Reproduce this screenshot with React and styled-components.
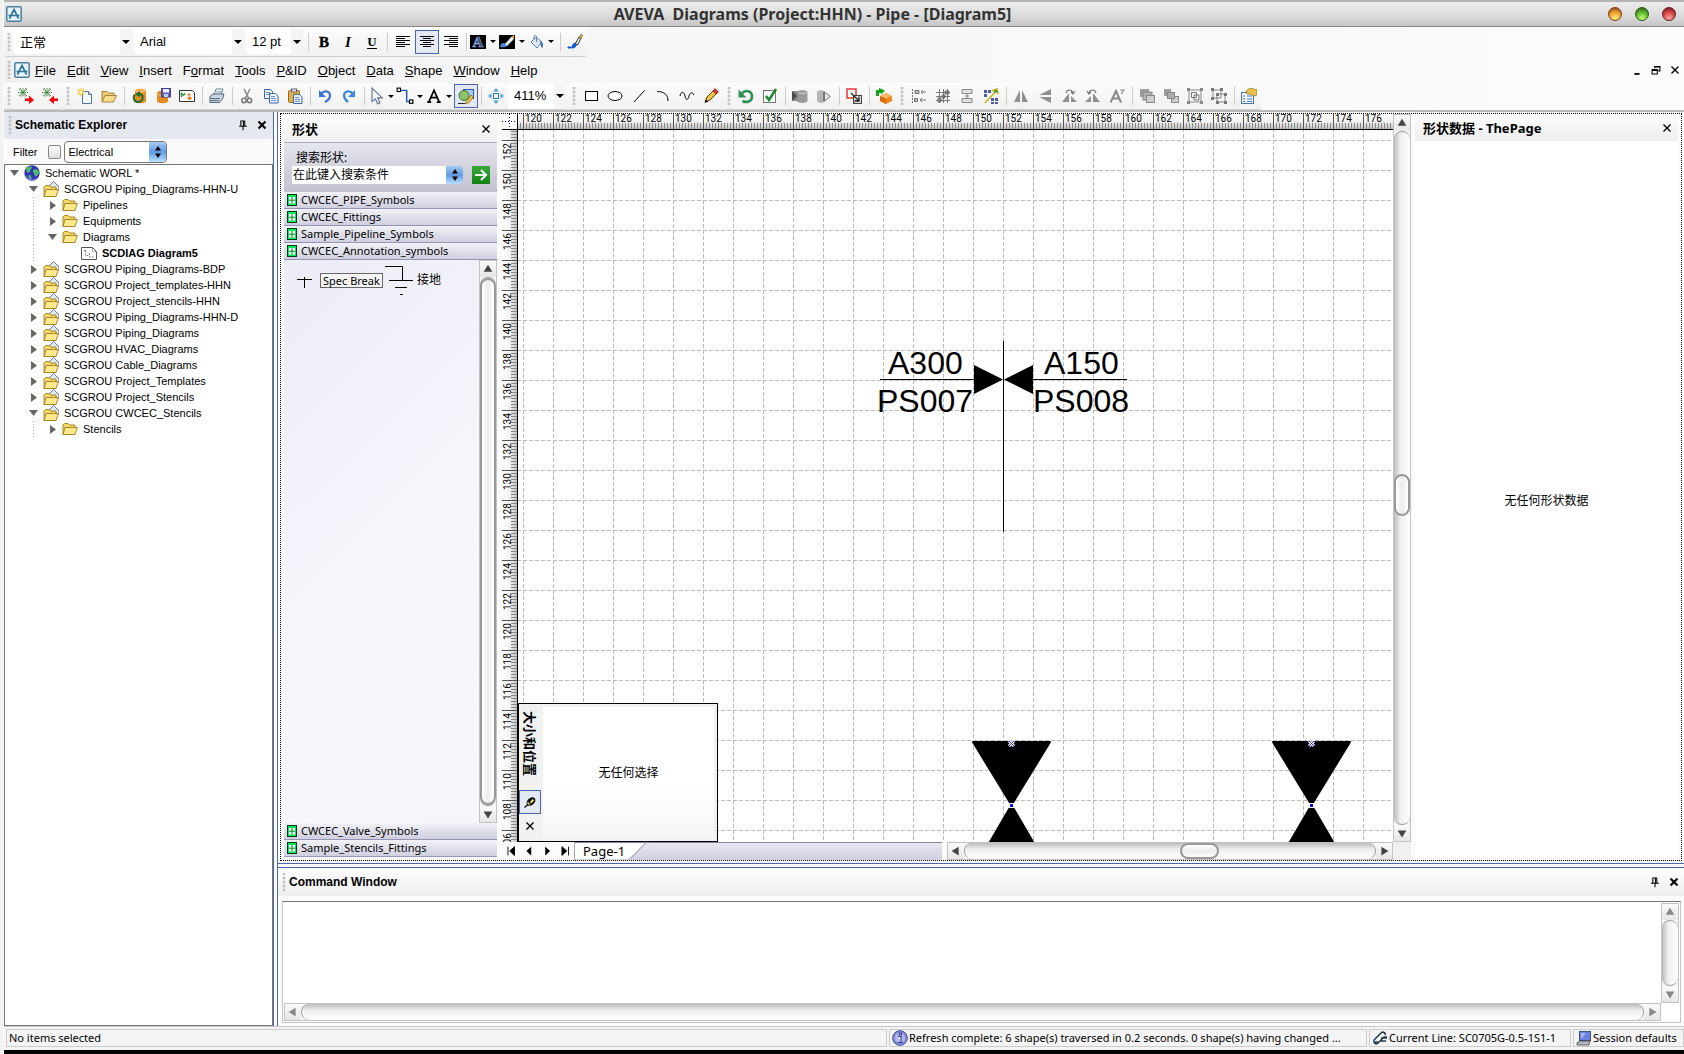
import React, { useState } from "react";
import styled, { createGlobalStyle, css } from "styled-components";

const UI = '"Liberation Sans", Arial, "Noto Sans CJK SC", sans-serif';
const SEG = '"Noto Sans", "Noto Sans CJK SC", sans-serif';
const SERIF = '"Liberation Serif", serif';
const BLUE = "#4a66ac";

const Global = createGlobalStyle`
  * { box-sizing: border-box; }
  body { margin: 0; background: #fbfbfb; color: #000; font: 12px/16px ${UI}; }
  button, input, select, textarea { font: inherit; color: inherit; margin: 0; padding: 0; border: 0; background: none; border-radius: 0; outline: none; }
  svg { display: block; flex: none; }
`;

/* ---------- icons (16 x 16) ---------- */
const Folder = (
  <>
    <path d="M1 13.500V4l1.500-1.500H6L7.500 4H13v3" fill="#f5d868" stroke="#a8862a" />
    <path d="M3 6.500h12.300L13 13.500H1z" fill="#ffe98c" stroke="#a8862a" />
  </>
);
const glyphs = {
  logo: (
    <>
      <rect x=".8" y=".8" width="14.400" height="14.400" rx="1.500" fill="#e6f2f7" stroke="#4c809c" strokeWidth="1.500" />
      <path d="M3.500 12.500L8 3.500l4.500 9M2.500 9.500h11" fill="none" stroke="#2e7795" strokeWidth="1.700" />
    </>
  ),
  bold: <text x="8" y="13" textAnchor="middle" fontFamily={SERIF} fontWeight="bold" fontSize="15" stroke="#000" strokeWidth=".4">B</text>,
  italic: <text x="8" y="13" textAnchor="middle" fontFamily={SERIF} fontWeight="bold" fontStyle="italic" fontSize="15">I</text>,
  underline: (
    <>
      <text x="8" y="12" textAnchor="middle" fontFamily={SERIF} fontWeight="bold" fontSize="13">U</text>
      <path d="M3 14.500h10" stroke="#000" />
    </>
  ),
  left: <path d="M1 2.500h14M1 4.500h9M1 6.500h14M1 8.500h9M1 10.500h14M1 12.500h9" stroke="#000" />,
  center: <path d="M1 2.500h14M4 4.500h8M1 6.500h14M4 8.500h8M1 10.500h14M4 12.500h8" stroke="#000" />,
  right: <path d="M1 2.500h14M6 4.500h9M1 6.500h14M6 8.500h9M1 10.500h14M6 12.500h9" stroke="#000" />,
  fontColor: (
    <>
      <rect x="0" y="1" width="16" height="14" fill="#000" />
      <text x="8" y="13" textAnchor="middle" fontFamily={SERIF} fontWeight="bold" fontSize="15" fill="#24407c" stroke="#9ab2e2" strokeWidth=".7">A</text>
    </>
  ),
  lineColor: (
    <>
      <rect x="0" y="1" width="16" height="14" fill="#000" />
      <path d="M1 13c1-4 3-5 6-3s-1 4-6 3z" fill="#4d8ae0" />
      <path d="M6 10l6-7 3 1-1 2-6 6z" fill="#e8edf5" />
      <path d="M12 3l3-2v4z" fill="#e5a93c" />
    </>
  ),
  bucket: (
    <>
      <path d="M3 8l5-5 6 5-5 6z" fill="#dfe9f6" stroke="#5b7fae" />
      <path d="M6 6V2.500c0-1.500 2.500-1.500 2.500 0V8" fill="none" stroke="#70849c" />
      <path d="M12 7c3 1 3.500 4 2.500 7-1.500 0-2-3-2.500-7z" fill="#3572bd" />
    </>
  ),
  brush: (
    <>
      <path d="M1 13h3v1H1z" fill="#0a50d0" stroke="#0a50d0" />
      <path d="M5 14c0-4 2-5 4-5 1 3-1 5-4 5z" fill="#0a62e0" stroke="#0a50d0" />
      <path d="M8.500 9.500L12 3l2 1-3.500 7z" fill="#fff" stroke="#111" strokeWidth=".9" />
      <path d="M12 4l2-4 1.500 1-1.500 4z" fill="#f0bc2a" stroke="#333" strokeWidth=".5" />
    </>
  ),
  exportTree: (
    <>
      <path d="M1 1l8 7M9 1L1 8M5 0v9M0 4.500h10M2 0l6 9M8 0L2 9" stroke="#2b7d2b" strokeWidth=".9" strokeDasharray="1.500 .7" />
      <path d="M7 10.500h4v-3l5 4.500-5 4v-3H7z" fill="#f00" />
    </>
  ),
  importTree: (
    <>
      <path d="M1 1l8 7M9 1L1 8M5 0v9M0 4.500h10M2 0l6 9M8 0L2 9" stroke="#2b7d2b" strokeWidth=".9" strokeDasharray="1.500 .7" />
      <path d="M16 10.500h-4v-3L7 12l5 4v-3h4z" fill="#f00" />
    </>
  ),
  newDoc: (
    <>
      <path d="M5.500 3.500h6l3 3v9h-9z" fill="#f4f8fd" stroke="#51749c" />
      <path d="M11.500 3.500v3h3" fill="#cfdff1" stroke="#51749c" />
      <path d="M4 0v8M0 4h8M1 1l6 6M7 1L1 7" stroke="#f0c840" strokeWidth="1.200" />
      <circle cx="4" cy="4" r="1.500" fill="#fff6b0" />
    </>
  ),
  open: (
    <>
      <path d="M1 13.500V3.500h5l1.500 1.500H13v3" fill="#eccb6c" stroke="#a5863c" />
      <path d="M4 7.500h11.500L12.500 14H1z" fill="#f7dc8a" stroke="#a5863c" />
    </>
  ),
  dbRefresh: (
    <>
      <path d="M4 3c0-3 11-3 11 0v10c0 3-11 3-11 0z" fill="#e68a22" />
      <ellipse cx="9.500" cy="3" rx="5.500" ry="2" fill="#f7b766" />
      <path d="M3.500 6.500c-2 4 0 7.500 3.500 7.500s5.500-3 4.500-6c-1-2-3-3-5-2" fill="none" stroke="#1c6b28" strokeWidth="2" />
      <path d="M9 3v6L4 6.500z" fill="#1c6b28" />
    </>
  ),
  dbSave: (
    <>
      <path d="M2 5c0-3 11-3 11 0v8c0 3-11 3-11 0z" fill="#e68a22" />
      <path d="M2 5c0 3 11 3 11 0" fill="none" stroke="#f8bd74" />
      <rect x="6.500" y=".5" width="9" height="8.500" fill="#5a5fb8" stroke="#3a3f88" />
      <rect x="8" y="1" width="6" height="3.500" fill="#eef" />
      <rect x="9" y="6" width="4" height="3" fill="#ccd" />
    </>
  ),
  image: (
    <>
      <path d="M.5 2.500h13l2 2v9H.5z" fill="#fff" stroke="#333" />
      <path d="M2.500 9V5.500L4.500 7l2-1.500" stroke="#2a8f35" fill="none" strokeWidth="1.500" />
      <path d="M10 5l2 2-2 1-2-1zM10.500 8l2.500 2-2.500 2.500L8 10z" fill="#f0801a" />
    </>
  ),
  print: (
    <>
      <path d="M5 7l2-6h7l-2 6z" fill="#fff" stroke="#6c8096" />
      <path d="M1 8.500L4 6h11l-1.500 5-3 3.500H1z" fill="#cbd7e4" stroke="#4f6379" />
      <path d="M2 10.500h9M2 12.500h8" stroke="#5a6e84" />
      <path d="M7.500 3.500h5M7 5h5" stroke="#9ab" />
    </>
  ),
  cut: (
    <>
      <path d="M5 1l4.500 9M11 1L6.500 10" stroke="#8a8a8a" strokeWidth="1.600" />
      <circle cx="5" cy="12.500" r="2.200" fill="none" stroke="#777" strokeWidth="1.500" />
      <circle cx="10.500" cy="12.500" r="2.200" fill="none" stroke="#777" strokeWidth="1.500" />
    </>
  ),
  copy: (
    <>
      <path d="M1.500 1.500h6l2 2v7h-8z" fill="#eaf2fc" stroke="#3f69a8" />
      <path d="M3 4.500h4M3 6.500h4" stroke="#6d92c8" />
      <path d="M6.500 5.500h6l2.500 2.500v7H6.500z" fill="#eaf2fc" stroke="#3f69a8" />
      <path d="M8 8.500h4M8 10.500h5M8 12.500h5" stroke="#6d92c8" />
    </>
  ),
  paste: (
    <>
      <rect x="1.500" y="2.500" width="11" height="12" rx="1" fill="#e3ae4a" stroke="#8f6a1e" />
      <rect x="4.500" y="1" width="5" height="3" fill="#d7dde6" stroke="#667" />
      <path d="M6.500 6.500h6l2.500 2.500v6.500H6.500z" fill="#eaf2fc" stroke="#3f69a8" />
      <path d="M8 9.500h4M8 11.500h5M8 13.500h5" stroke="#6d92c8" />
    </>
  ),
  undo: (
    <>
      <path d="M4 5.500c4-4 9-2 9 2 0 3-2 5-5 6.500" fill="none" stroke="#3e72d8" strokeWidth="2.200" />
      <path d="M2 2v7h7z" fill="#3e72d8" />
    </>
  ),
  redo: (
    <>
      <path d="M12 5.500c-4-4-9-2-9 2 0 3 2 5 4 6.500" fill="none" stroke="#3e86dc" strokeWidth="2.200" />
      <path d="M14 2v7H7z" fill="#3e86dc" />
    </>
  ),
  pointer: <path d="M4.500 1v12l3-2.500 2 4.500 2-1-2-4.300h4z" fill="#f5f9ff" stroke="#5c7390" />,
  connector: (
    <>
      <path d="M4 3h5.500v10H12" fill="none" stroke="#1d5bbf" strokeWidth="1.300" />
      <rect x="1" y="1" width="3" height="3" fill="#fff" stroke="#000" />
      <rect x="12" y="11.500" width="3" height="3" fill="#fff" stroke="#000" />
    </>
  ),
  letterA: <path d="M3.500 13L8 3l4.500 10M5 9.500h6M2 13.500h3.500M10.500 13.500H14" fill="none" stroke="#000" strokeWidth="1.500" />,
  shapesTool: (
    <>
      <rect x="5.500" y="1.500" width="10" height="9" fill="#a9c9ee" stroke="#2c61a8" />
      <circle cx="6" cy="7.500" r="5" fill="#8cc26a" stroke="#44762b" />
      <path d="M8 14l5-7 2.500 2-5 6-3 .5z" fill="#f2c94c" stroke="#7c5a1a" strokeWidth=".7" />
      <path d="M0 15.500h7" stroke="#222" />
    </>
  ),
  pan: (
    <>
      <rect x="5.500" y="5.500" width="5" height="5" fill="#eaf3fd" stroke="#3d78ba" />
      <path d="M8 0l2.800 3.500H5.200zM8 16l2.800-3.500H5.200zM0 8l3.500-2.800v5.600zM16 8l-3.500-2.800v5.600z" fill="#5a9be0" />
    </>
  ),
  rect: <rect x="2.500" y="3.500" width="12" height="9" fill="#fff" stroke="#000" />,
  ellipse: <ellipse cx="8" cy="8" rx="7" ry="4.500" fill="#fff" stroke="#000" />,
  line: <path d="M3 14L13.500 2.500" stroke="#000" fill="none" />,
  arc: <path d="M2 3.500c7 0 11 3 11 9.500" stroke="#000" fill="none" />,
  free: <path d="M1 8c1-5 4-5 5 0s3 4 4 0 4-4 5-1" stroke="#000" fill="none" />,
  pencil: (
    <>
      <path d="M2 14.500L4 9l7-7 3 3-7 7z" fill="#f6c63b" stroke="#3a2b0c" strokeWidth=".9" />
      <path d="M10 3l2-2.500L15.500 4 13 6z" fill="#d93636" stroke="#6a1a1a" strokeWidth=".7" />
      <path d="M2 14.500l1-3 2 2z" fill="#000" />
    </>
  ),
  refresh: (
    <>
      <path d="M4 5.500c3-4 10-3 10 3 0 5.500-6 6.500-9.500 4.500" fill="none" stroke="#2d9152" strokeWidth="2.600" />
      <path d="M.5 1.500v8h8z" fill="#2d9152" />
    </>
  ),
  check: (
    <>
      <rect x="1.500" y="2.500" width="12" height="12" fill="#fdfdfd" stroke="#777" />
      <path d="M4 8l3 4 7-11" fill="none" stroke="#178a2b" strokeWidth="2.500" />
    </>
  ),
  dbIn: (
    <>
      <path d="M5 4c0-2.500 10.500-2.500 10.500 0v9c0 2.500-10.500 2.500-10.500 0z" fill="#9c9c9c" />
      <path d="M0 3h6v10H0z" fill="#8a8a8a" />
      <path d="M0 3l5 5-5 5z" fill="#4c4c4c" />
      <path d="M6 4c0 2 9.500 2 9.500 0" fill="none" stroke="#d0d0d0" />
    </>
  ),
  dbOut: (
    <>
      <path d="M1 4c0-2.500 8-2.500 8 0v9c0 2.500-8 2.500-8 0z" fill="#b5b5b5" />
      <path d="M7.500 4v9M8.500 4l6 4.500-6 4.500z" fill="#e6e6e6" stroke="#777" />
    </>
  ),
  linkShape: (
    <>
      <rect x="1" y="1" width="9" height="9" fill="none" stroke="#e23b3b" strokeWidth="1.500" />
      <rect x="7.500" y="7.500" width="8" height="8" fill="#dcdcdc" stroke="#444" />
      <path d="M5 5l7.500 7.500M13 8.500v4.500H8.500" stroke="#222" strokeWidth="1.300" fill="none" />
    </>
  ),
  cube: (
    <>
      <path d="M4 8l6-3 6 3v5l-6 3-6-3z" fill="#f08a1c" />
      <path d="M4 8l6 2.500V16l-6-3z" fill="#d96e08" />
      <path d="M4 8l6-3 6 3-6 2.500z" fill="#ffb866" />
      <path d="M0 8V2h3V0l6 2.500L5 6.500V5H3v3z" fill="#13a813" />
    </>
  ),
  alignL: (
    <>
      <path d="M1.500 1v14" stroke="#777" strokeDasharray="2 1" />
      <path d="M4 2.500h4v3H4zM3.500 10.500h3v3h-3z" fill="#bbb" stroke="#777" />
      <path d="M10 4h5M12 2l-2 2 2 2M9 12h6M11 10l-2 2 2 2" fill="none" stroke="#777" />
    </>
  ),
  gridSnap: <path d="M1 4.500h14M1 8.500h14M1 12.500h14M4.500 1v14M8.500 1v14M12.500 1v14M10 3h4v3h-4zM3 10h3v4H3zM7 7h3v3H7z" fill="#888" stroke="#777" />,
  distribute: <path d="M3 1.500h10v4H3zM3 10.500h10v4H3zM8 5.500v5M6 8h4" fill="#e2e2e2" stroke="#888" />,
  layout: (
    <>
      <path d="M1 2h3v3H1zM5 2h3v3H5zM1 6h3v3H1zM8 10h3v3H8zM12 10h3v3h-3zM8 14h3v2H8zM12 14h3v2h-3z" fill="#5158a8" />
      <path d="M2 15L14 2M9 3l5-2 1 5" stroke="#c9b41c" strokeWidth="1.600" fill="none" />
      <path d="M12 1l3 3-4 1z" fill="#2e9a3c" />
    </>
  ),
  flipH: <path d="M7 2v12H1zM9 2v12h6z" fill="#909090" />,
  flipV: <path d="M14 7H2l12-6zM14 9H2l12 6z" fill="#909090" />,
  rotL: (
    <>
      <path d="M8 5v9H1zM10 8v6h6z" fill="#909090" />
      <path d="M5 5c1-4 6-4 7 0M10 4l2 2 2-3" fill="none" stroke="#777" strokeWidth="1.200" />
    </>
  ),
  rotR: (
    <>
      <path d="M8 5v9h7zM6 8v6H0z" fill="#909090" />
      <path d="M11 5c-1-4-6-4-7 0M6 4L4 6 2 3" fill="none" stroke="#777" strokeWidth="1.200" />
    </>
  ),
  rotText: (
    <>
      <path d="M1.500 14.500L7 3l5 11.500M4 10.500h6" fill="none" stroke="#8a8a8a" strokeWidth="2" />
      <path d="M11 2h4l-3 4" fill="none" stroke="#8a8a8a" strokeWidth="1.200" />
    </>
  ),
  front: (
    <>
      <rect x="1" y="1" width="9" height="8" fill="#9d9d9d" />
      <rect x="4" y="4" width="9" height="8" fill="#b0b0b0" stroke="#888" />
      <rect x="7.500" y="7.500" width="8" height="7" fill="#cdcdcd" stroke="#888" />
    </>
  ),
  back: (
    <>
      <rect x="1" y="1" width="7" height="7" fill="#9d9d9d" />
      <rect x="8.500" y="8.500" width="7" height="6" fill="#cdcdcd" stroke="#888" />
      <rect x="4.500" y="4.500" width="7" height="6" fill="#acacac" stroke="#888" />
    </>
  ),
  group: (
    <>
      <path d="M2 2h12v12H2z" fill="none" stroke="#888" />
      <path d="M4.500 4.500h5v5h-5zM7 7h5v5H7z" fill="none" stroke="#777" />
      <path d="M0 0h3v3H0zM13 0h3v3h-3zM0 13h3v3H0zM13 13h3v3h-3z" fill="#888" />
    </>
  ),
  ungroup: (
    <>
      <path d="M2 2h8v8H2zM6 6h8v8H6z" fill="none" stroke="#888" />
      <path d="M0 0h3v3H0zM9 0h3v3H9zM0 9h3v3H0zM13 5h3v3h-3zM5 13h3v3H5zM13 13h3v3h-3zM5 5h3v3H5z" fill="#777" />
    </>
  ),
  props: (
    <>
      <rect x=".5" y="4.500" width="12" height="11" fill="#eef3fa" stroke="#51749c" />
      <path d="M2 8h2M6 8h5M2 11h2M6 11h5M2 13.500h2M6 13.500h5" stroke="#4d7ab8" />
      <path d="M5 3l4-3 7 2v5l-3 1-4-2H6z" fill="#e9c04a" stroke="#8d6f20" strokeWidth=".7" />
    </>
  ),
  globe: (
    <>
      <circle cx="8" cy="8" r="7.700" fill="#3434b4" />
      <path d="M2 4c2-3 5-3 6-2 0 2-2 2-2 4s-2 2-3 1zM9 5c3-2 5 0 6 2-1 4-3 5-4 4s0-3-2-4zM5 10c2 0 3 2 2 5-2-1-3-3-2-5z" fill="#4bc06a" />
      <path d="M2 11c2 4 7 5 10 3" stroke="#8f8fe6" fill="none" />
    </>
  ),
  folder: Folder,
  folderDoc: (
    <>
      <path d="M5 6l5.500-5.500L16 6v3H5z" fill="#e3e8f2" stroke="#666c86" strokeWidth=".9" />
      <g transform="translate(0 2)">{Folder}</g>
    </>
  ),
  diagram: (
    <>
      <path d="M.5 2.500h11l4 4v8H.5z" fill="#fff" stroke="#555" />
      <path d="M11.500 2.500v4h4M3 5.500h3M4.500 5.500v5h4M8.500 8v4h4" fill="none" stroke="#888" strokeDasharray="2 1" />
    </>
  ),
  info: (
    <>
      <circle cx="8" cy="8" r="7.300" fill="#8a90dc" stroke="#3c4290" />
      <circle cx="8" cy="8" r="5" fill="#b4b9f0" />
      <path d="M6 6.500h3v5.500M5.500 12.500h5.500M7.500 3h2v2h-2z" fill="#fff" stroke="#3c4290" strokeWidth="1.200" />
    </>
  ),
  pipe: (
    <path d="M2 10l7-7c2-2 5 0 4 2M2 10c-1 3 2 5 4 3l6-6h3M9 8h6M8 11h6M3 12h3" fill="none" stroke="#24384a" strokeWidth="1.500" />
  ),
  computer: (
    <>
      <rect x="3.500" y="1.500" width="11" height="9" fill="#6c80e0" stroke="#44506c" />
      <path d="M5 3h5l-4 5H5z" fill="#a9b6f4" />
      <path d="M1 13l3-2h10l-1 4H1z" fill="#b6bac2" stroke="#444" strokeWidth=".8" />
    </>
  ),
  pin: <path d="M5.500 3v6M10 3v6M5 3.500h5M8.500 3v6M3.500 9.500h9M8 10v4" fill="none" stroke="#000" strokeWidth="1.200" />,
  close: <path d="M4 4l8 8M12 4l-8 8" stroke="#000" strokeWidth="1.600" />,
  closeBold: <path d="M4 4l8 8M12 4l-8 8" stroke="#000" strokeWidth="2.400" />,
  tack: (
    <>
      <ellipse cx="9" cy="7.500" rx="5" ry="3.500" transform="rotate(-40 9 7.500)" fill="#111" />
      <path d="M8 8l3-3 1 1.500-3 3z" fill="#f6f27a" />
      <path d="M5.500 8.500l2 2" stroke="#f6f27a" strokeWidth="1.200" />
      <path d="M2.500 13.500L6 10.500" stroke="#000" strokeWidth="1.200" />
    </>
  ),
  minimise: <path d="M5 12.500h6" stroke="#000" strokeWidth="2" />,
  restore: <path d="M6.500 6V4h6v5h-2M6.500 4.500h6M3.500 7.500h6v5h-6zM3.500 8.500h6" fill="none" stroke="#000" strokeWidth="1.200" />,
  stencil: (
    <>
      <rect x="3.500" y="2.500" width="9" height="11" fill="#00e85c" stroke="#0a3a12" />
      <path d="M5 5h6v6.500H5z" fill="#fff" />
      <path d="M5 8.200h6M8 5v6.500" stroke="#0a7a20" />
    </>
  ),
  first: <path d="M4.500 3v10M12 3v10L6.500 8z" stroke="#000" />,
  prev: <path d="M10.500 3v10L5 8z" />,
  next: <path d="M6 3v10l5.500-5z" />,
  last: <path d="M12 3v10M4.500 3v10L10 8z" stroke="#000" />,
};

const Icon = ({ name, size = 16 }) => (
  <svg width={size} height={size} viewBox="0 0 16 16" fill="#000" aria-hidden="true">{glyphs[name]}</svg>
);

/* ---------- shell ---------- */
const Shell = styled.div`
  display: flex; flex-direction: column; height: 100vh; padding-left: 4px;
  background: linear-gradient(90deg, #f2f2f2 3px, transparent 3px);
`;
const TitleBar = styled.header`
  display: flex; align-items: center; height: 27px; flex: none; padding-left: 2px;
  background: linear-gradient(#ececec, #dedede 50%, #c6c6c6);
  border-top: 2px solid #b4b4b4; border-bottom: 1px solid #888;
`;
const Title = styled.h1`
  flex: 1; margin: 0; padding-left: 6px; text-align: center; white-space: pre;
  font: bold 16px/22px ${SEG}; color: #333;
`;
const WindowButtons = styled.div`display: flex; gap: 13px; padding-right: 8px; padding-left: 11px;`;
const Orb = styled.button`
  width: 14px; height: 14px; border-radius: 50%;
  background: radial-gradient(circle at 50% 85%, ${(p) => p.$light}, ${(p) => p.$base} 50%, ${(p) => p.$dark} 95%);
  border: 1px solid ${(p) => p.$dark};
`;
const Bars = styled.div`
  flex: none; border-bottom: 2px solid #b8b8b8;
  background: linear-gradient(90deg, #f0f0f0, #f7f7f7 40%, #fbfbfb);
`;
const Bar = styled.div`
  display: flex; align-items: center; height: ${(p) => p.$h}px;
`;
const Group = styled.div`
  display: flex; align-items: center; height: 100%; flex: none;
  background: linear-gradient(#fcfcfc, #f1f1f1);
  border-bottom: 1px solid #cfcfcf; border-radius: 3px;
`;
const Grip = styled.span`
  width: ${(p) => p.$w || 11}px; height: 18px; flex: none;
  background: radial-gradient(circle, #c4c4c4 1px, transparent 2px) center / 4px 4px repeat-y;
`;
const Rule = styled.span`
  width: ${(p) => p.$w || 6}px; height: 18px; flex: none;
  background: linear-gradient(#ccc, #ccc) center / 1px 100% no-repeat;
`;
const ToolButton = styled.button`
  display: flex; align-items: center; justify-content: center; flex: none;
  width: ${(p) => p.$w || 24}px; height: 24px;
  ${(p) => p.$on && css`background: #e3e8f3; border: 1px solid ${BLUE};`}
`;
const DropButton = styled(ToolButton)`
  width: ${(p) => p.$w || 29}px; justify-content: space-between; padding-right: 2px;
`;
const Caret = styled.span`
  width: 0; height: 0; flex: none; margin: 0 ${(p) => p.$m || 0}px;
  border: ${(p) => p.$s || 4}px solid transparent; border-top-color: #000; border-bottom: 0;
`;
const Combo = styled.label`
  display: flex; align-items: center; height: 25px; width: ${(p) => p.$w}px; flex: none;
  margin-right: 2px; padding-left: 6px; background: #fff; font-size: 13px;
`;
const ComboSelect = styled.select`flex: 1; min-width: 0; appearance: none; font-family: ${(p) => (p.$cjk ? SEG : UI)};`;
const ComboArrow = styled.span`
  display: flex; align-items: center; justify-content: center; width: 12px; height: 100%; background: #f4f4f4;
`;
const MenuItem = styled.button`font-size: 13px; margin-left: 5px; margin-right: 6px; padding-top: 1px;`;
const Spacer = styled.span`flex: 1;`;

const Main = styled.main`display: flex; flex: 1; min-height: 0;`;

/* ---------- explorer ---------- */
const Explorer = styled.aside`
  display: flex; flex-direction: column; width: 270px; flex: none; border-right: 1px solid ${BLUE};
`;
const PanelHead = styled.div`
  display: flex; align-items: center; flex: none; height: ${(p) => p.$h}px; padding: 0 ${(p) => p.$pr || 0}px ${(p) => p.$pb || 0}px ${(p) => p.$pl || 0}px;
  background: ${(p) => p.$bg || "linear-gradient(#fdfdfd, #eeeeee)"};
  ${(p) => p.$ruled && css`border-top: 1px solid ${BLUE};`}
`;
const PanelTitle = styled.h2`
  flex: 1; margin: 0; white-space: nowrap;
  font: bold ${(p) => (p.$cjk ? `13px/18px ${SEG}` : `12px/16px ${UI}`)};
`;
const HeadButton = styled.button`display: flex; align-items: center; justify-content: center; width: 19px; height: 18px;`;
const FilterRow = styled.div`
  display: flex; align-items: center; height: 25px; flex: none; padding-left: 9px; font-size: 11px; background: #fafafa;
`;
const FilterLabel = styled.label`display: flex; align-items: center; gap: 11px; margin-right: 3px;`;
const Tick = styled.input`
  appearance: none; width: 13px; height: 14px; border: 1px solid #8a8a8a !important; border-radius: 2px !important;
  background: linear-gradient(#fff, #ddd) !important;
`;
const Aqua = styled.label`
  display: flex; width: ${(p) => p.$w}px; height: 22px; padding-left: 3px; background: #fff;
  border: 1px solid #777; border-radius: 4px; overflow: hidden;
`;
const Stepper = styled.span`
  display: flex; align-items: center; justify-content: center; width: 17px; flex: none; align-self: stretch;
  background: linear-gradient(#a8cbf2, #5f9be2 50%, #b9e0ff); border-radius: 0 4px 4px 0;
`;
const Steps = () => (
  <Stepper><svg width="8" height="14" viewBox="0 0 8 14"><path d="M4 1l3 4.500H1zM4 13l3-4.500H1z" /></svg></Stepper>
);
const Tree = styled.ul`
  flex: 1; margin: 0; padding: 0; list-style: none; background: #fff; border: 1px solid #777; min-height: 0; overflow: hidden;
`;
const TreeRow = styled.li`
  display: flex; align-items: center; height: 16px; font-size: 11px; white-space: nowrap;
  font-weight: ${(p) => (p.$bold ? "bold" : "normal")};
`;
const Guide = styled.span`
  width: 19px; height: 16px; flex: none;
  ${(p) => p.$on && css`background: repeating-linear-gradient(#aaa 0 1px, transparent 1px 3px) center / 1px 100% no-repeat;`}
`;
const Toggle = styled.button`display: flex; align-items: center; justify-content: center; width: 19px; height: 16px; flex: none;`;
const IconCell = styled.span`display: flex; width: 21px; flex: none;`;

const treeData = [
  [0, "open", "globe", "Schematic WORL *"],
  [1, "open", "folderDoc", "SCGROU Piping_Diagrams-HHN-U"],
  [2, "shut", "folder", "Pipelines"],
  [2, "shut", "folder", "Equipments"],
  [2, "open", "folder", "Diagrams"],
  [3, "leaf", "diagram", "SCDIAG Diagram5"],
  [1, "shut", "folderDoc", "SCGROU Piping_Diagrams-BDP"],
  [1, "shut", "folderDoc", "SCGROU Project_templates-HHN"],
  [1, "shut", "folderDoc", "SCGROU Project_stencils-HHN"],
  [1, "shut", "folderDoc", "SCGROU Piping_Diagrams-HHN-D"],
  [1, "shut", "folderDoc", "SCGROU Piping_Diagrams"],
  [1, "shut", "folderDoc", "SCGROU HVAC_Diagrams"],
  [1, "shut", "folderDoc", "SCGROU Cable_Diagrams"],
  [1, "shut", "folderDoc", "SCGROU Project_Templates"],
  [1, "shut", "folderDoc", "SCGROU Project_Stencils"],
  [1, "open", "folderDoc", "SCGROU CWCEC_Stencils"],
  [2, "shut", "folder", "Stencils"],
];

/* ---------- work area ---------- */
const Column = styled.div`
  display: flex; flex-direction: column; flex: 1; min-width: 0; margin-left: 3px; border-left: 1px solid ${BLUE};
`;
const Work = styled.div`
  display: flex; flex: 1; min-height: 0; margin: 1px 2px 2px; border: 1px dotted #000;
`;
const Shapes = styled.section`
  display: flex; flex-direction: column; width: 213px; flex: none; margin: 3px 5px 3px 3px;
`;
const Search = styled.div`
  height: 50px; flex: none; padding: 6px 7px 8px 8px; border-top: 1px solid #b0b0c4;
  background: linear-gradient(#e6e6ee, #c0c0d0); font: 12px/18px ${SEG};
`;
const SearchLabel = styled.label`display: block; height: 17px; padding-left: 4px;`;
const SearchRow = styled.div`display: flex; height: 18px;`;
const SearchInput = styled.input`flex: 1; min-width: 0; padding-left: 1px; background: #fff;`;
const Go = styled.button`
  display: flex; align-items: center; justify-content: center; width: 18px; margin-left: 9px;
  background: linear-gradient(#3aa83a, #128312);
`;
const StencilBar = styled.button`
  display: flex; align-items: center; gap: 1px; height: 17px; flex: none; font: 11px/16px ${SEG};
  background: linear-gradient(#f2f2f7, #cfcfdf); border-bottom: 1px solid #9494b4;
`;
const StencilBody = styled.div`
  display: flex; flex: 1; min-height: 0; background: linear-gradient(135deg, #ececf6, #f7f7fd 60%, #f4f6fc);
`;
const Masters = styled.div`display: flex; flex: 1; align-items: center; gap: 2px; height: 40px; padding-left: 12px; font: 12px/16px ${SEG};`;
const Master = styled.button`
  display: flex; align-items: center; white-space: nowrap;
  ${(p) => p.$sel && css`border: 1px solid #666; line-height: 13px; padding: 0 2px; margin-left: 6px; background: #f5f5f5; font-size: 11px;`}
`;

/* ---------- scroll bars ---------- */
const ScrollBox = styled.div`
  display: flex; flex: none; flex-direction: ${(p) => (p.$v ? "column" : "row")};
  ${(p) => (p.$v ? "width: 18px;" : "height: 18px;")}
  border: 1px solid #c2c2c2; background: #f6f6f6;
`;
const ScrollButton = styled.button`
  display: flex; align-items: center; justify-content: center; flex: none; width: 16px; height: 16px;
  background: linear-gradient(#fafafa, #e6e6e6);
`;
const Track = styled.div`
  display: flex; flex: 1; min-width: 0; min-height: 0; flex-direction: ${(p) => (p.$v ? "column" : "row")};
  border-radius: 8px; border: 1px solid #9a9a9a;
  border-${(p) => (p.$v ? "left" : "top")}: 0; border-${(p) => (p.$v ? "right" : "bottom")}: 0;
  background: linear-gradient(${(p) => (p.$v ? "90deg" : "180deg")}, #bbb, #efefef 40%, #fff);
`;
const Thumb = styled.div`
  flex: ${(p) => p.$size || "1"}; border: 2px solid #999; border-radius: 8px;
  background: linear-gradient(${(p) => (p.$v ? "90deg" : "180deg")}, #fff, #ececec 50%, #fff);
`;
const Gap = styled.span`flex: ${(p) => p.$n};`;
const arrows = { up: "M8 3l5 8H3z", down: "M8 13l5-8H3z", left: "M3 8l8-5v10z", right: "M13 8L5 3v10z" };
const Arrow = ({ dir, dim }) => (
  <svg width="14" height="14" viewBox="0 0 16 16"><path d={arrows[dir]} fill={dim ? "#888" : "#444"} /></svg>
);
const Scroll = ({ v, dim, before, size, after }) => (
  <ScrollBox $v={v}>
    <ScrollButton aria-label={v ? "Scroll up" : "Scroll left"}><Arrow dir={v ? "up" : "left"} dim={dim} /></ScrollButton>
    <Track $v={v}>
      {before ? <Gap $n={before} /> : null}
      {size ? <Thumb $v={v} $size={size} /> : null}
      {after ? <Gap $n={after} /> : null}
    </Track>
    <ScrollButton aria-label={v ? "Scroll down" : "Scroll right"}><Arrow dir={v ? "down" : "right"} dim={dim} /></ScrollButton>
  </ScrollBox>
);

/* ---------- drawing ---------- */
const Drawing = styled.section`display: flex; flex-direction: column; flex: 1; min-width: 0;`;
const DrawRow = styled.div`display: flex; flex: 1; min-height: 0;`;
const Sheet = styled.div`
  display: grid; flex: 1; min-width: 0; min-height: 0; grid-template: 16px minmax(0, 1fr) / 16px minmax(0, 1fr);
`;
const Corner = styled.div`
  background:
    repeating-linear-gradient(#00c 0 1px, transparent 1px 3px) center / 1px 100% no-repeat,
    repeating-linear-gradient(90deg, #00c 0 1px, transparent 1px 3px) center / 100% 1px no-repeat;
  border-right: 1px solid #000; border-bottom: 1px solid #000;
`;
const RulerX = styled.div`
  display: flex; overflow: hidden; padding-left: 5px; border-bottom: 1px solid #000;
  background:
    repeating-linear-gradient(90deg, #888 0 1px, transparent 1px 3px) 2px 100% / 100% 6px no-repeat,
    linear-gradient(#fff, #f2f2f2 50%, #c4c4c4);
`;
const MarkX = styled.span`
  width: 30px; flex: none; padding-left: 1px; border-left: 1px solid #555;
  font: 10px/10px Roboto, sans-serif;
`;
const RulerY = styled.div`
  overflow: hidden; padding-top: 10px; border-right: 1px solid #000;
  background:
    repeating-linear-gradient(#888 0 1px, transparent 1px 3px) 100% 1px / 6px 100% no-repeat,
    linear-gradient(90deg, #fff, #f2f2f2 50%, #c4c4c4);
`;
const MarkY = styled.span`
  display: block; height: 30px; width: 15px; padding-bottom: 2px; border-bottom: 1px solid #555;
  writing-mode: vertical-rl; rotate: 180deg; text-align: right;
  font: 10px/12px Roboto, sans-serif;
`;
const Canvas = styled.div`position: relative; overflow: hidden; background: #fff;`;
const Art = styled.svg`width: 100%; height: 100%; font: 32px ${UI};`;
const SizeWindow = styled.div`
  position: absolute; left: 0; bottom: 0; display: flex; width: 200px; height: 139px; padding: 3px 3px 3px 0;
  background: #f1f1f1; border: 1px solid #000;
`;
const SizeStrip = styled.div`display: flex; flex-direction: column; align-items: center; width: 24px; padding: 4px 2px 0 0;`;
const SizeTitle = styled.h3`flex: 1; margin: 0; writing-mode: vertical-rl; text-orientation: sideways; font: bold 13px/20px ${SEG};`;
const SizeBody = styled.div`
  display: flex; flex: 1; align-items: center; justify-content: center; background: linear-gradient(#fff 60%, #f6f6f6); font: 12px/16px ${SEG};
`;
const TabRow = styled.div`display: flex; height: 18px; flex: none;`;
const PageNav = styled.button`display: flex; align-items: center; justify-content: center; width: 18px;`;
const TabStrip = styled.div`
  display: flex; width: 368px; flex: 0 1 368px; margin-right: 5px;
  background: linear-gradient(#e8e8f0, #cfcfe0); border-top: 1px solid #8686a6; border-left: 1px solid #aaa;
`;
const TabEdge = styled.div`height: 16px; padding-right: 1px; background: #8686a6; clip-path: polygon(0 0, 100% 0, calc(100% - 16px) 100%, 0 100%);`;
const PageTab = styled.button`
  display: block; height: 16px; padding: 0 20px 0 8px; font: 13px/14px ${SEG}; background: #fff; clip-path: polygon(0 0, 100% 0, calc(100% - 16px) 100%, 0 100%);
`;
const HScroll = styled.div`
  flex: 1; min-width: 0; padding-right: 18px; background: #f0f0f0;
`;

const Valve = ({ x }) => (
  <g transform={`translate(${x} 611)`}>
    <path d="M-38 1h77L.5 64zM.5 64L-38 130h77z" fill="#000" stroke="#000" strokeWidth="2" strokeLinejoin="round" />
    <path d="M-2 0l5 5M3 0l-5 5" stroke="#fff" strokeWidth="3" />
    <path d="M-2 0l5 5M3 0l-5 5" stroke="#22f" strokeWidth="1" />
    <rect x="-2" y="62" width="5" height="5" fill="#fff" />
    <rect x="-1" y="63" width="3" height="3" fill="#00f" />
  </g>
);

/* ---------- shape data, command window, status ---------- */
const DataPanel = styled.section`
  display: flex; flex-direction: column; width: 263px; flex: none; margin: 0 3px 0 4px; background: #fff;
`;
const Empty = styled.div`
  display: flex; flex: 1; align-items: center; justify-content: center; font: 12px/16px ${SEG};
`;
const Command = styled.section`
  display: flex; flex-direction: column; flex: none; height: 163px; border-top: 1px solid ${BLUE}; padding-top: 3px;
`;
const CommandBox = styled.div`
  display: grid; flex: 1; min-height: 0; grid-template: minmax(0, 1fr) 18px / minmax(0, 1fr) 18px;
  margin: 5px 3px 3px 4px; padding: 1px; background: #fff; border: 1px solid #c4c4c4; border-top-color: #777;
`;
const CommandText = styled.textarea`resize: none; width: 100%; height: 100%; overflow: hidden;`;
const Status = styled.footer`
  display: flex; gap: 2px; height: 28px; flex: none; padding: 2px 0 3px 2px; background: #f4f4f4;
  border-top: 1px solid #c8c8c8; border-bottom: 4px solid #000; font: 11px/16px ${SEG};
`;
const StatusCell = styled.div`
  display: flex; align-items: center; gap: 1px; padding: 0 2px; white-space: nowrap; border: 1px solid #ccc;
  flex: ${(p) => p.$f};
`;

const menus = [["", "F", "ile"], ["", "E", "dit"], ["", "V", "iew"], ["", "I", "nsert"], ["F", "o", "rmat"], ["", "T", "ools"], ["", "P", "&ID"], ["", "O", "bject"], ["", "D", "ata"], ["", "S", "hape"], ["", "W", "indow"], ["", "H", "elp"]];

const tools = [
  ["exportTree", "importTree"],
  ["newDoc", "open", "|", "dbRefresh", "dbSave", "image", "|", "print", "|", "cut", "copy", "paste", "|", "undo", "redo", "|", ">pointer", ">connector", ">letterA", "*shapesTool", "|", "pan", "%"],
  ["rect", "ellipse", "line", "arc", "free", "pencil"],
  ["refresh", "check", "|", "dbIn", "dbOut", "|", "linkShape", "|", "cube"],
  ["alignL", "gridSnap", "distribute", "layout", "|", "flipH", "flipV", "rotL", "rotR", "rotText", "|", "front", "back", "group", "ungroup", "|", "props"],
];

const Picker = ({ w, value, label, cjk }) => (
  <Combo $w={w}>
    <ComboSelect aria-label={label} $cjk={cjk} defaultValue={value}><option>{value}</option></ComboSelect>
    <ComboArrow><Caret /></ComboArrow>
  </Combo>
);

const Tool = ({ t }) => {
  if (t === "|") return <Rule />;
  if (t === "%") return <Picker w={58} value="411%" label="Zoom" />;
  if (t[0] === ">") return <DropButton aria-label={t.slice(1)}><Icon name={t.slice(1)} size={18} /><Caret $s={3} /></DropButton>;
  const on = t[0] === "*";
  const name = on ? t.slice(1) : t;
  return <ToolButton $on={on} aria-label={name}><Icon name={name} /></ToolButton>;
};

const range = (from, to, step) => Array.from({ length: Math.floor(Math.abs(to - from) / Math.abs(step)) + 1 }, (_, i) => from + i * step);

const Stencil = ({ children }) => <StencilBar><Icon name="stencil" />{children}</StencilBar>;

export default function App() {
  const [query, setQuery] = useState("在此键入搜索条件");
  return (
    <>
      <Global />
      <Shell>
        <TitleBar>
          <Icon name="logo" />
          <Title>{"AVEVA  Diagrams (Project:HHN) - Pipe - [Diagram5]"}</Title>
          <WindowButtons>
            <Orb aria-label="Minimise" $light="#fff27a" $base="#f0a030" $dark="#7a4020" />
            <Orb aria-label="Maximise" $light="#c8ff70" $base="#5fb82c" $dark="#2c5a1c" />
            <Orb aria-label="Close" $light="#ffa8a0" $base="#d84848" $dark="#6a1c1c" />
          </WindowButtons>
        </TitleBar>

        <Bars>
          <Bar $h={30}>
            <Group>
              <Grip $w={10} />
              <Picker w={118} value="正常" label="Style" cjk />
              <Picker w={110} value="Arial" label="Font" />
              <Picker w={57} value="12 pt" label="Font size" />
              <Rule $w={7} />
              {["bold", "italic", "underline"].map((n) => <ToolButton key={n} aria-label={n}><Icon name={n} /></ToolButton>)}
              <Rule $w={7} />
              <ToolButton aria-label="Align left"><Icon name="left" /></ToolButton>
              <ToolButton $on aria-label="Align centre"><Icon name="center" /></ToolButton>
              <ToolButton aria-label="Align right"><Icon name="right" /></ToolButton>
              <Rule $w={7} />
              {["fontColor", "lineColor", "bucket"].map((n) => <DropButton key={n} aria-label={n}><Icon name={n} /><Caret $m={1} $s={3} /></DropButton>)}
              <Rule />
              <ToolButton aria-label="Format painter"><Icon name="brush" /></ToolButton>
            </Group>
          </Bar>
          <Bar $h={26}>
            <Grip $w={10} />
            <Icon name="logo" />
            {menus.map(([a, b, c]) => <MenuItem key={a + b + c}>{a}<u>{b}</u>{c}</MenuItem>)}
            <Spacer />
            <HeadButton aria-label="Minimise document"><Icon name="minimise" size={14} /></HeadButton>
            <HeadButton aria-label="Restore document"><Icon name="restore" size={14} /></HeadButton>
            <HeadButton aria-label="Close document"><Icon name="close" size={14} /></HeadButton>
          </Bar>
          <Bar $h={27}>
            {tools.map((g, i) => (
              <Group key={i}>
                <Grip $w={i ? 11 : 10} />
                {g.map((t, k) => <Tool key={k} t={t} />)}
              </Group>
            ))}
          </Bar>
        </Bars>

        <Main>
          <Explorer>
            <PanelHead $h={27} $bg="#e6e8f0" $pr={2} $pb={2}>
              <Grip />
              <PanelTitle>Schematic Explorer</PanelTitle>
              <HeadButton aria-label="Pin"><Icon name="pin" size={14} /></HeadButton>
              <HeadButton aria-label="Close"><Icon name="closeBold" size={14} /></HeadButton>
            </PanelHead>
            <FilterRow>
              <FilterLabel>Filter<Tick type="checkbox" /></FilterLabel>
              <Aqua $w={103}>
                <ComboSelect aria-label="Filter by" defaultValue="Electrical"><option>Electrical</option></ComboSelect>
                <Steps />
              </Aqua>
            </FilterRow>
            <Tree>
              {treeData.map(([level, state, icon, label]) => (
                <TreeRow key={label} $bold={state === "leaf"}>
                  {range(0, level, 1).slice(1).map((n) => <Guide key={n} $on={n === 2} />)}
                  {state === "leaf" ? <Guide /> : (
                    <Toggle aria-label={`Toggle ${label}`}>
                      <svg width="9" height="9" viewBox="0 0 9 9"><path d={state === "open" ? "M0 1h9L4.500 7z" : "M2 0v9l6-4.500z"} fill="#666" /></svg>
                    </Toggle>
                  )}
                  <IconCell><Icon name={icon} /></IconCell>
                  {label}
                </TreeRow>
              ))}
            </Tree>
          </Explorer>

          <Column>
            <Work>
              <Shapes>
                <PanelHead $h={25} $pl={8} $pr={2} $pb={2}>
                  <PanelTitle $cjk>形状</PanelTitle>
                  <HeadButton aria-label="Close"><Icon name="close" size={14} /></HeadButton>
                </PanelHead>
                <Search>
                  <SearchLabel htmlFor="find">搜索形状:</SearchLabel>
                  <SearchRow>
                    <SearchInput id="find" value={query} onChange={(e) => setQuery(e.target.value)} />
                    <Steps />
                    <Go aria-label="Search"><svg width="14" height="14" viewBox="0 0 14 14"><path d="M1 7h11M7 2l5 5-5 5" fill="none" stroke="#fff" strokeWidth="2" /></svg></Go>
                  </SearchRow>
                </Search>
                <Stencil>CWCEC_PIPE_Symbols</Stencil>
                <Stencil>CWCEC_Fittings</Stencil>
                <Stencil>Sample_Pipeline_Symbols</Stencil>
                <Stencil>CWCEC_Annotation_symbols</Stencil>
                <StencilBody>
                  <Masters>
                    <svg width="16" height="16" viewBox="0 0 16 16"><path d="M1 7.500h15M8.500 5v11" stroke="#000" /></svg>
                    <Master $sel>Spec Break</Master>
                    <svg width="30" height="30" viewBox="0 0 30 30"><path d="M0 1.500h17.500V15M4 15.500h24M10 22.500h12M15 29.500h3" fill="none" stroke="#000" /></svg>
                    <Master>接地</Master>
                  </Masters>
                  <Scroll v size="1" />
                </StencilBody>
                <Stencil>CWCEC_Valve_Symbols</Stencil>
                <Stencil>Sample_Stencils_Fittings</Stencil>
              </Shapes>

              <Drawing>
                <DrawRow>
                  <Sheet>
                    <Corner />
                    <RulerX>{range(120, 176, 2).map((n) => <MarkX key={n}>{n}</MarkX>)}</RulerX>
                    <RulerY>{range(152, 106, -2).map((n) => <MarkY key={n}>{n}</MarkY>)}</RulerY>
                    <Canvas>
                      <Art>
                        <defs>
                          <pattern id="grid" x="5" y="10" width="30" height="30" patternUnits="userSpaceOnUse">
                            <path d="M0 .5h30M.5 0v30" stroke="#bbb" strokeDasharray="4 2" />
                          </pattern>
                        </defs>
                        <rect width="100%" height="100%" fill="url(#grid)" />
                        <path d="M362 249.500h95M514 249.500h95M485.500 211v191" stroke="#000" />
                        <path d="M456 235v29l29-14.500zM515 235v29l-29-14.500z" />
                        <text x="370" y="244">A300</text>
                        <text x="359" y="282">PS007</text>
                        <text x="526" y="244">A150</text>
                        <text x="515" y="282">PS008</text>
                        <Valve x={493} />
                        <Valve x={793} />
                      </Art>
                      <SizeWindow>
                        <SizeStrip>
                          <SizeTitle>大小和位置</SizeTitle>
                          <ToolButton $on $w={22} aria-label="Auto hide"><Icon name="tack" /></ToolButton>
                          <ToolButton $w={22} aria-label="Close"><Icon name="close" size={14} /></ToolButton>
                        </SizeStrip>
                        <SizeBody>无任何选择</SizeBody>
                      </SizeWindow>
                    </Canvas>
                  </Sheet>
                  <Scroll v before="344" size="0 0 42px" after="309" />
                </DrawRow>
                <TabRow>
                  {["first", "prev", "next", "last"].map((n) => <PageNav key={n} aria-label={n}><Icon name={n} size={14} /></PageNav>)}
                  <TabStrip><TabEdge><PageTab>Page-1</PageTab></TabEdge></TabStrip>
                  <HScroll><Scroll before="214" size="0 0 39px" after="156" /></HScroll>
                </TabRow>
              </Drawing>

              <DataPanel>
                <PanelHead $h={27} $pl={8} $pr={2}>
                  <PanelTitle $cjk>形状数据 - ThePage</PanelTitle>
                  <HeadButton aria-label="Close"><Icon name="close" size={14} /></HeadButton>
                </PanelHead>
                <Empty>无任何形状数据</Empty>
              </DataPanel>
            </Work>

            <Command>
              <PanelHead $h={29} $pr={1} $ruled>
                <Grip />
                <PanelTitle>Command Window</PanelTitle>
                <HeadButton aria-label="Pin"><Icon name="pin" size={14} /></HeadButton>
                <HeadButton aria-label="Close"><Icon name="closeBold" size={14} /></HeadButton>
              </PanelHead>
              <CommandBox>
                <CommandText aria-label="Command input" />
                <Scroll v dim />
                <Scroll dim />
              </CommandBox>
            </Command>
          </Column>
        </Main>

        <Status>
          <StatusCell $f="1 1 0">No items selected</StatusCell>
          <StatusCell $f="0 0 478px"><Icon name="info" />Refresh complete: 6 shape(s) traversed in 0.2 seconds. 0 shape(s) having changed ...</StatusCell>
          <StatusCell $f="0 0 202px"><Icon name="pipe" />Current Line: SC0705G-0.5-1S1-1</StatusCell>
          <StatusCell $f="0 0 111px"><Icon name="computer" />Session defaults</StatusCell>
        </Status>
      </Shell>
    </>
  );
}
